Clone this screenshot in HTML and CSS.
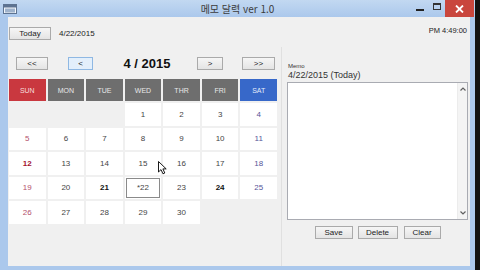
FILE: index.html
```html
<!DOCTYPE html>
<html lang="ko">
<head>
    <meta charset="UTF-8">
    <title>메모 달력 ver 1.0</title>
    <link rel="stylesheet" href="styles.css">
</head>
<body>
<div class="window">
    <header class="titlebar">
        <svg class="app-icon" width="14" height="10" viewBox="0 0 14 10">
            <rect x="0.5" y="0.5" width="13" height="9" fill="#f4f7fb" stroke="#5d7391"/>
            <rect x="1" y="1" width="12" height="2.5" fill="#5d7391"/>
            <rect x="2" y="4.5" width="10" height="4" fill="#9fb3cc"/>
        </svg>
        <div class="title">메모 달력 ver 1.0</div>
        <div class="controls">
            <span class="ctl min"><i></i></span>
            <span class="ctl max"><i></i></span>
            <span class="ctl close">
                <svg width="9" height="8" viewBox="0 0 9 8"><path d="M1 0.5 L8 7.5 M8 0.5 L1 7.5" stroke="#fff" stroke-width="1.8"/></svg>
            </span>
        </div>
    </header>

    <main class="client">
        <div class="toolbar">
            <button class="btn today-btn">Today</button>
            <span class="today-date">4/22/2015</span>
            <span class="clock">PM 4:49:00</span>
        </div>

        <div class="body">
            <section class="calendar">
                <div class="nav">
                    <button class="btn nav-first">&lt;&lt;</button>
                    <button class="btn nav-prev">&lt;</button>
                    <div class="month">4 / 2015</div>
                    <button class="btn nav-next">&gt;</button>
                    <button class="btn nav-last">&gt;&gt;</button>
                </div>

                <div class="grid">
                    <div class="head sun">SUN</div>
                    <div class="head">MON</div>
                    <div class="head">TUE</div>
                    <div class="head">WED</div>
                    <div class="head">THR</div>
                    <div class="head">FRI</div>
                    <div class="head sat">SAT</div>

                    <div class="empty"></div>
                    <div class="empty"></div>
                    <div class="empty"></div>
                    <div class="day">1</div>
                    <div class="day">2</div>
                    <div class="day">3</div>
                    <div class="day sat">4</div>

                    <div class="day sun">5</div>
                    <div class="day">6</div>
                    <div class="day">7</div>
                    <div class="day">8</div>
                    <div class="day">9</div>
                    <div class="day">10</div>
                    <div class="day sat">11</div>

                    <div class="day sun bold">12</div>
                    <div class="day">13</div>
                    <div class="day">14</div>
                    <div class="day">15</div>
                    <div class="day">16</div>
                    <div class="day">17</div>
                    <div class="day sat">18</div>

                    <div class="day sun">19</div>
                    <div class="day">20</div>
                    <div class="day bold">21</div>
                    <div class="day selected">*22</div>
                    <div class="day">23</div>
                    <div class="day bold">24</div>
                    <div class="day sat">25</div>

                    <div class="day sun">26</div>
                    <div class="day">27</div>
                    <div class="day">28</div>
                    <div class="day">29</div>
                    <div class="day">30</div>
                    <div class="empty"></div>
                    <div class="empty"></div>
                </div>
            </section>

            <section class="memo">
                <div class="memo-label">Memo</div>
                <div class="memo-date">4/22/2015 (Today)</div>
                <div class="memo-box">
                    <div class="memo-text"></div>
                    <div class="scrollbar">
                        <svg width="6" height="4" viewBox="0 0 6 4"><path d="M0.5 3.5 L3 1 L5.5 3.5" fill="none" stroke="#606060" stroke-width="1.2"/></svg>
                        <svg width="6" height="4" viewBox="0 0 6 4"><path d="M0.5 0.5 L3 3 L5.5 0.5" fill="none" stroke="#606060" stroke-width="1.2"/></svg>
                    </div>
                </div>
                <div class="memo-actions">
                    <button class="btn save-btn">Save</button>
                    <button class="btn delete-btn">Delete</button>
                    <button class="btn clear-btn">Clear</button>
                </div>
            </section>
        </div>
    </main>
</div>

<svg class="cursor" width="10" height="14" viewBox="0 0 10 14">
    <path d="M0.5 0.5 L0.5 11 L3 8.6 L5 12.8 L6.8 12 L4.9 7.9 L8.2 7.9 Z" fill="#fff" stroke="#000" stroke-width="0.9"/>
</svg>
</body>
</html>
```

FILE: styles.css
```css
* {
    box-sizing: border-box;
}

body {
    margin: 0;
    width: 480px;
    height: 270px;
    overflow: hidden;
    position: relative;
    background: #111;
    font-family: "Liberation Sans", Arial, sans-serif;
}

.window {
    width: 475px;
    height: 270px;
    display: flex;
    flex-direction: column;
    background: #abc8ec;
}

.titlebar {
    height: 17px;
    display: grid;
    grid-template-columns: 1fr auto 1fr;
    align-items: center;
    background: linear-gradient(#c2d8f1, #abc8ec);
}

.app-icon {
    margin-left: 3px;
}

.title {
    font-family: "Noto Sans CJK KR", sans-serif;
    font-size: 10px;
    line-height: 17px;
    color: #3b3b3b;
}

.controls {
    justify-self: end;
    display: flex;
    height: 17px;
    margin-right: 1px;
}

.ctl {
    display: flex;
    align-items: center;
    justify-content: center;
    width: 17px;
}

.min i {
    width: 8px;
    height: 2px;
    margin-top: 3px;
    background: #222;
}

.max i {
    width: 8px;
    height: 7px;
    margin-top: -4px;
    border: 1px solid #333;
    border-top-width: 2px;
}

.close {
    width: 29px;
    background: #c9463d;
}

.client {
    flex: 1;
    margin: 0 5px 4px 8px;
    display: flex;
    flex-direction: column;
    background: #f0f0f0;
}

.btn {
    height: 13px;
    padding: 0;
    font-family: "Liberation Sans", Arial, sans-serif;
    font-size: 8px;
    color: #222;
    background: linear-gradient(#f6f6f6, #e4e4e4);
    border: 1px solid #aaaaaa;
}

.toolbar {
    height: 30px;
    display: flex;
    align-items: center;
    padding: 2px 3px 0 1px;
    font-size: 8px;
    color: #222;
}

.today-btn {
    width: 42px;
}

.today-date {
    margin-left: 8px;
}

.clock {
    margin-left: auto;
    align-self: flex-start;
    margin-top: 7px;
    font-size: 7.5px;
}

.body {
    flex: 1;
    display: flex;
}

.calendar {
    width: 273px;
    padding: 10px 4px 0 1px;
}

.nav {
    display: flex;
    align-items: center;
    height: 13px;
}

.nav-first {
    margin-left: 7px;
    width: 32px;
}

.nav-prev {
    margin-left: 20px;
    width: 25px;
    background: #e3effb;
    border-color: #8fb8e3;
}

.month {
    width: 104px;
    padding-left: 4px;
    text-align: center;
    font-size: 13px;
    font-weight: bold;
    color: #111;
}

.nav-next {
    width: 26px;
}

.nav-last {
    margin-left: 19px;
    width: 33px;
}

.grid {
    margin-top: 9px;
    display: grid;
    grid-template-columns: repeat(7, 1fr);
    grid-template-rows: 22px repeat(5, 22.5px);
    gap: 2px;
}

.head,
.day {
    display: flex;
    align-items: center;
    justify-content: center;
}

.head {
    font-size: 7px;
    color: #e8e8e8;
    background: #6e6e6e;
}

.head.sun {
    background: #c9383f;
    color: #f6dede;
}

.head.sat {
    background: #3768c9;
    color: #e3ebfa;
}

.day {
    font-size: 8px;
    color: #444;
    background: #fff;
}

.day.sun {
    color: #b4506c;
}

.day.sat {
    color: #555599;
}

.day.bold {
    font-weight: bold;
    color: #111;
}

.day.sun.bold {
    color: #a3142e;
}

.day.selected {
    outline: 1px solid #8a8a8a;
    outline-offset: -2px;
}

.memo {
    flex: 1;
    display: flex;
    flex-direction: column;
    padding: 15px 2px 0 5px;
    border-left: 1px solid #e0e0e0;
}

.memo-label {
    font-size: 6px;
    line-height: 8px;
    color: #333;
    padding-left: 1px;
}

.memo-date {
    font-size: 9px;
    line-height: 11px;
    color: #333;
    padding-left: 1px;
}

.memo-box {
    margin-top: 1px;
    height: 138px;
    display: flex;
    background: #fff;
    border: 1px solid #a9abb2;
}

.memo-text {
    flex: 1;
}

.scrollbar {
    width: 10px;
    display: flex;
    flex-direction: column;
    justify-content: space-between;
    align-items: center;
    padding: 4px 0 4px;
    background: #f4f4f4;
    border-left: 1px solid #ececec;
}

.memo-actions {
    margin-top: 6px;
    display: flex;
    justify-content: center;
    gap: 5px;
}

.save-btn {
    width: 38px;
}

.delete-btn {
    width: 40px;
}

.clear-btn {
    width: 37px;
    margin-left: 1px;
}

.cursor {
    position: absolute;
    left: 158px;
    top: 161px;
}
```
